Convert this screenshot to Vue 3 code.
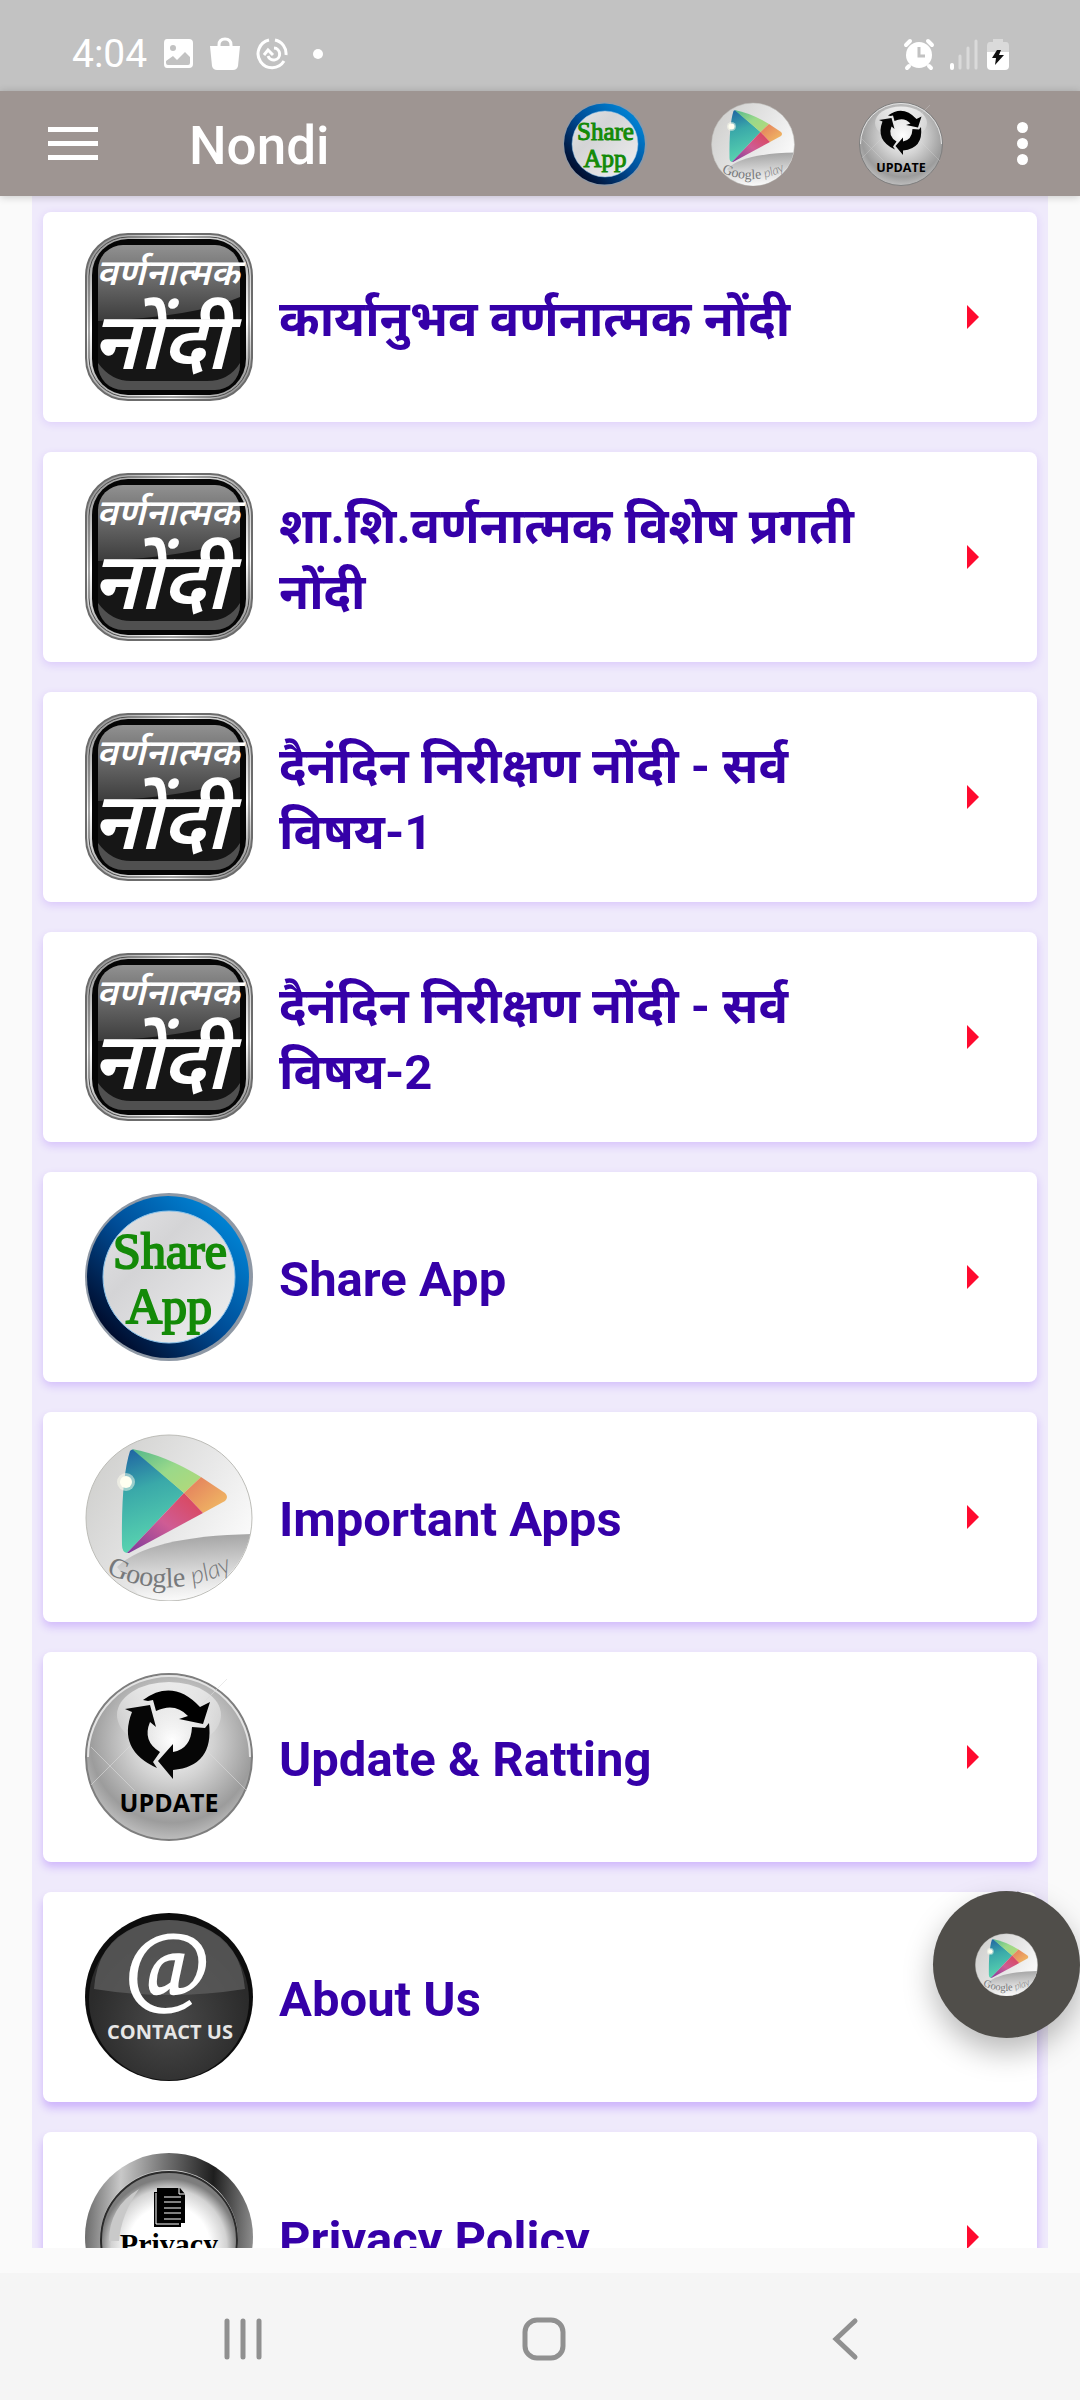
<template>
  <div class="screen">
    <!-- shared gradients and artwork -->
    <svg class="sprite" width="0" height="0" aria-hidden="true">
      <defs>
        <linearGradient id="rim" x1="0" y1="0" x2="1" y2="1">
          <stop offset="0" stop-color="#777" />
          <stop offset="0.3" stop-color="#fff" />
          <stop offset="0.5" stop-color="#aaa" />
          <stop offset="0.75" stop-color="#fff" />
          <stop offset="1" stop-color="#666" />
        </linearGradient>
        <linearGradient id="gloss" x1="0" y1="0" x2="0" y2="1">
          <stop offset="0" stop-color="#919191" />
          <stop offset="1" stop-color="#3c3c3c" />
        </linearGradient>
        <linearGradient id="blueRing" x1="0.15" y1="0.85" x2="0.85" y2="0.15">
          <stop offset="0" stop-color="#000d2e" />
          <stop offset="0.5" stop-color="#004c96" />
          <stop offset="1" stop-color="#0081d2" />
        </linearGradient>
        <linearGradient id="silver" x1="0" y1="0" x2="1" y2="1">
          <stop offset="0" stop-color="#e4e4e6" />
          <stop offset="0.35" stop-color="#d4d4d6" />
          <stop offset="1" stop-color="#f0f0f1" />
        </linearGradient>
        <linearGradient id="playBall" x1="0" y1="0.2" x2="1" y2="0.8">
          <stop offset="0" stop-color="#cfcfcd" />
          <stop offset="0.55" stop-color="#e8e8e8" />
          <stop offset="1" stop-color="#fff" />
        </linearGradient>
        <linearGradient id="playTeal" x1="0.1" y1="0" x2="0.3" y2="1">
          <stop offset="0" stop-color="#1f64a3" />
          <stop offset="0.4" stop-color="#3aa9a9" />
          <stop offset="1" stop-color="#5bd6b0" />
        </linearGradient>
        <linearGradient id="playGreen" x1="0" y1="0" x2="1" y2="1">
          <stop offset="0" stop-color="#52b78b" />
          <stop offset="0.5" stop-color="#9ad98a" />
          <stop offset="1" stop-color="#b5d977" />
        </linearGradient>
        <linearGradient id="playRed" x1="1" y1="0" x2="0" y2="1">
          <stop offset="0" stop-color="#dd4352" />
          <stop offset="0.5" stop-color="#cf5c94" />
          <stop offset="1" stop-color="#7b3a9c" />
        </linearGradient>
        <linearGradient id="playOrange" x1="0" y1="0" x2="1" y2="1">
          <stop offset="0" stop-color="#e2795c" />
          <stop offset="1" stop-color="#f2c065" />
        </linearGradient>
        <linearGradient id="playShade" x1="0.5" y1="0" x2="0.6" y2="1">
          <stop offset="0" stop-color="#a2a2a2" />
          <stop offset="0.6" stop-color="#dedede" />
          <stop offset="1" stop-color="#fff" />
        </linearGradient>
        <radialGradient id="glassBall" cx="0.52" cy="0.4" r="0.62">
          <stop offset="0" stop-color="#fff" />
          <stop offset="0.4" stop-color="#d2d2d2" />
          <stop offset="0.8" stop-color="#9c9c9c" />
          <stop offset="1" stop-color="#c4c4c4" />
        </radialGradient>
        <linearGradient id="glassTop" x1="0" y1="0" x2="0" y2="1">
          <stop offset="0" stop-color="#fff" stop-opacity="0.7" />
          <stop offset="1" stop-color="#fff" stop-opacity="0" />
        </linearGradient>
        <radialGradient id="darkBall" cx="0.5" cy="0.62" r="0.5">
          <stop offset="0" stop-color="#4a4a4a" />
          <stop offset="1" stop-color="#2b2b2b" />
        </radialGradient>
        <linearGradient id="metal" x1="0" y1="0.4" x2="1" y2="0.45">
          <stop offset="0" stop-color="#6b6b6b" />
          <stop offset="0.2" stop-color="#c8c8c8" />
          <stop offset="0.45" stop-color="#757575" />
          <stop offset="0.75" stop-color="#1e1e1e" />
          <stop offset="1" stop-color="#8c8c8c" />
        </linearGradient>
        <radialGradient id="pearl" cx="0.5" cy="0.55" r="0.5">
          <stop offset="0.6" stop-color="#fff" />
          <stop offset="0.85" stop-color="#d2d2d2" />
          <stop offset="1" stop-color="#7d7d7d" />
        </radialGradient>
        <path id="playCurve" d="M21 140 Q84 171 152 135" />
        <clipPath id="ballClip"><circle cx="84" cy="84" r="83" /></clipPath>
        <clipPath id="faceClip"><rect x="13" y="12" width="142" height="145" rx="25" /></clipPath>
      </defs>

      <symbol id="icon-nondi" viewBox="0 0 168 168">
        <rect x="1" y="1" width="166" height="166" rx="42" fill="url(#rim)" stroke="#6c6c6c" stroke-width="2" />
        <rect x="4" y="4" width="160" height="160" rx="39" fill="none" stroke="#4b4b4b" stroke-width="1" />
        <rect x="7" y="6" width="154" height="156" rx="36" fill="#050505" />
        <g clip-path="url(#faceClip)">
          <rect x="13" y="12" width="142" height="145" fill="#161616" />
          <path d="M13 12H155V64Q110 84 13 88Z" fill="url(#gloss)" />
          <path d="M13 130Q26 148 46 148H122Q144 148 155 130V157H13Z" fill="#505050" />
        </g>
      </symbol>

      <symbol id="icon-share" viewBox="0 0 168 168">
        <circle cx="84" cy="84" r="84" fill="#8e98a5" />
        <circle cx="83" cy="84" r="81" fill="url(#blueRing)" />
        <circle cx="84" cy="84" r="66" fill="url(#silver)" stroke="#8cc3ea" stroke-width="1" />
      </symbol>

      <symbol id="icon-play" viewBox="0 0 168 168">
        <circle cx="84" cy="85" r="83" fill="url(#playBall)" stroke="#bdbdb8" stroke-width="1" />
        <g clip-path="url(#ballClip)">
          <path d="M32 134Q64 103 168 101V170H60Z" fill="url(#playShade)" />
        </g>
        <path d="M45 18Q47 15 51 18L99 60L42 120Q37 119 37 112Q36 46 45 18Z" fill="url(#playTeal)" />
        <path d="M47 16Q80 22 116 44L99 60Z" fill="url(#playGreen)" />
        <path d="M116 44L140 60Q144 64 140 68L118 80L99 60Z" fill="url(#playOrange)" />
        <path d="M99 60L118 80L44 120H42Z" fill="url(#playRed)" />
        <circle cx="41" cy="49" r="9" fill="#fffff0" opacity="0.5" />
        <circle cx="41" cy="49" r="6" fill="#fffff0" />
      </symbol>

      <symbol id="icon-update" viewBox="0 0 168 168">
        <circle cx="84" cy="84" r="83" fill="url(#glassBall)" stroke="#7e7e7e" stroke-width="2" />
        <path d="M3 84A81 81 0 0 1 165 84" fill="none" stroke="#e3e3e3" stroke-width="2" />
        <ellipse cx="84" cy="42" rx="52" ry="33" fill="url(#glassTop)" />
        <path d="M6 112L60 58M106 42L142 6M118 74L162 118M6 74L50 118" stroke="#dcdcdc" stroke-width="1" opacity="0.6" />
        <path d="M58 27Q88 5 115 34L125 29L118 51L94 46L103 43Q90 29 71 38L68 27L63 28Z" fill="#000" />
        <path d="M65 32L40 36L47 39Q32 77 72 95L68 89L75 79Q57 68 65 49L71 54Z" fill="#060606" />
        <path d="M73 88L88 71V79Q106 76 107 54L120 55L124 50Q129 93 88 97V106Z" fill="#060606" />
      </symbol>

      <symbol id="icon-contact" viewBox="0 0 168 168">
        <circle cx="84" cy="84" r="84" fill="#0d0d0d" />
        <circle cx="84" cy="87" r="80" fill="url(#darkBall)" />
        <path d="M9 76Q12 30 50 14Q84 0 118 14Q156 30 160 76Q84 88 9 76Z" fill="#5c5c5c" opacity="0.8" />
      </symbol>

      <symbol id="icon-privacy" viewBox="0 0 168 168">
        <circle cx="84" cy="84" r="84" fill="url(#metal)" />
        <circle cx="84" cy="86" r="69" fill="#ccc" />
        <circle cx="84" cy="87" r="68" fill="url(#pearl)" stroke="#2b2b2b" stroke-width="2" />
        <path d="M24 88Q24 54 54 36Q36 62 34 88Z" fill="#c9c9c9" />
        <path d="M72 35H95L100 41V70H96V74H69V39H72Z" fill="#000" />
        <path d="M94 35V41H100M79 44H96M79 49H96M79 55H96M79 60H96M79 66H96M71 40V71H94" fill="none" stroke="#fff" stroke-width="1" />
      </symbol>
    </svg>

    <div class="status-bar">
      <div class="status-left">
        <span class="clock">4:04</span>
        <svg class="status-icon" viewBox="0 0 32 34">
          <path fill-rule="evenodd" d="M5 2H27Q31 2 31 6V27Q31 31 27 31H5Q2 31 2 27V6Q2 2 5 2ZM11 8A3 3 0 1 0 11 14A3 3 0 1 0 11 8ZM4 24V26Q4 28 6 28H26Q28 28 28 26V20L23 15L15 23L11 19Z" fill="#fff" />
        </svg>
        <svg class="status-icon" viewBox="0 0 32 34">
          <path d="M10 10V8Q10 2 16 2T22 8V10" fill="none" stroke="#fff" stroke-width="3" />
          <path d="M1 9H31L29 29Q28 33 24 33H8Q4 33 3 29Z" fill="#fff" />
        </svg>
        <svg class="status-icon" viewBox="0 0 32 34">
          <g fill="none" stroke="#fff" stroke-width="3">
            <path d="M13 3A14 14 0 1 0 28 24M19 3A14 14 0 0 1 30 18" />
            <path d="M18 11A6 6 0 1 1 12 19M8 18L12 13L17 18" />
          </g>
        </svg>
        <span class="dot"></span>
      </div>
      <div class="status-right">
        <svg class="status-icon" viewBox="0 0 32 34">
          <circle cx="16" cy="18" r="13" fill="#fff" />
          <path d="M3 8L7 4M29 8L25 4M6 29L4 31M26 29L28 31" stroke="#fff" stroke-width="4" stroke-linecap="round" />
          <path d="M16 10V19H22" fill="none" stroke="#c2c2c2" stroke-width="3" />
        </svg>
        <svg class="status-icon" viewBox="0 0 32 34">
          <path d="M4 28V31" stroke="#fff" stroke-width="4" stroke-linecap="round" />
          <path d="M12 19V31M20 11V31M28 4V31" stroke="#dadada" stroke-width="3" stroke-linecap="round" />
        </svg>
        <svg class="battery" viewBox="0 0 22 34">
          <path d="M6 2H16V5H19Q22 5 22 9V16H0V9Q0 5 3 5H6Z" fill="#dadada" />
          <path d="M0 15H22V29Q22 33 18 33H4Q0 33 0 29Z" fill="#fff" />
          <path d="M10 13L5 21H9L8 28L17 18H12L14 13Z" fill="#111" />
        </svg>
      </div>
    </div>

    <header class="app-bar">
      <button class="menu-btn" aria-label="Menu">
        <span></span><span></span><span></span>
      </button>
      <h1 class="app-title">Nondi</h1>
      <div class="actions">
        <button
          v-for="action in actions"
          :key="action.icon"
          class="action-btn"
          :aria-label="action.label"
        >
          <BadgeIcon :name="action.icon" />
        </button>
      </div>
      <button class="more-btn" aria-label="More options">
        <span></span><span></span><span></span>
      </button>
    </header>

    <main class="content">
      <ul class="list">
        <li v-for="(item, index) in items" :key="item.title">
          <button class="card" :style="{ boxShadow: cardShadow(index) }">
            <BadgeIcon class="card-icon" :name="item.icon" />
            <span class="card-title">{{ item.title }}</span>
            <svg class="card-arrow" viewBox="0 0 12 24"><path d="M0 0L12 12L0 24Z" fill="#ff0a2f" /></svg>
          </button>
        </li>
      </ul>
    </main>

    <button class="fab" aria-label="Google play">
      <BadgeIcon class="fab-icon" name="play" />
    </button>

    <nav class="nav-bar">
      <button aria-label="Recents">
        <svg viewBox="0 0 44 44"><path d="M6 4V40M22 4V40M38 4V40" /></svg>
      </button>
      <button aria-label="Home">
        <svg viewBox="0 0 44 44"><rect x="3" y="3" width="38" height="38" rx="12" /></svg>
      </button>
      <button aria-label="Back">
        <svg viewBox="0 0 44 44"><path d="M32 4L13 22L32 40" /></svg>
      </button>
    </nav>
  </div>
</template>

<script setup>
import { h, ref } from 'vue'

// lettering that sits on top of each badge
const badgeTexts = {
  nondi: [
    { x: 83, y: 52, cls: 'nondi-small', text: 'वर्णनात्मक' },
    { x: 75, y: 136, cls: 'nondi-large', text: 'नोंदी' }
  ],
  share: [
    { x: 85, y: 75, cls: 'share', text: 'Share' },
    { x: 84, y: 130, cls: 'share', text: 'App' }
  ],
  update: [{ x: 84, y: 139, cls: 'update', text: 'UPDATE' }],
  contact: [
    { x: 82, y: 82, cls: 'contact-at', text: '@' },
    { x: 85, y: 126, cls: 'contact', text: 'CONTACT US' }
  ],
  privacy: [{ x: 84, y: 101, cls: 'privacy', text: 'Privacy' }]
}

const BadgeIcon = ({ name }) => h('svg', { class: 'badge', viewBox: '0 0 168 168' }, [
  h('use', { href: `#icon-${name}` }),
  ...(badgeTexts[name] || []).map((t) =>
    h('text', { x: t.x, y: t.y, class: `badge-text badge-${t.cls}` }, t.text)
  ),
  name === 'play' && h('text', { class: 'badge-google' }, [
    h('textPath', { href: '#playCurve' }, [
      'Google ',
      h('tspan', { class: 'badge-play' }, 'play')
    ])
  ])
])
BadgeIcon.props = ['name']

const actions = [
  { icon: 'share', label: 'Share App' },
  { icon: 'play', label: 'Google play' },
  { icon: 'update', label: 'Update' }
]

const items = ref([
  { icon: 'nondi', title: 'कार्यानुभव वर्णनात्मक नोंदी' },
  { icon: 'nondi', title: 'शा.शि.वर्णनात्मक विशेष प्रगती नोंदी' },
  { icon: 'nondi', title: 'दैनंदिन निरीक्षण नोंदी - सर्व विषय-1' },
  { icon: 'nondi', title: 'दैनंदिन निरीक्षण नोंदी - सर्व विषय-2' },
  { icon: 'share', title: 'Share App' },
  { icon: 'play', title: 'Important Apps' },
  { icon: 'update', title: 'Update & Ratting' },
  { icon: 'contact', title: 'About Us' },
  { icon: 'privacy', title: 'Privacy Policy' }
])

// shadows grow towards the bottom of the list
const cardShadow = (index) => {
  const offset = 2 + Math.round(index / 2)
  return `0 ${offset}px 8px rgba(120, 40, 255, ${0.14 + index * 0.02})`
}
</script>

<style>
body {
  background: #fafafa;
}

.badge {
  display: block;
  width: 100%;
  height: 100%;
}

.badge-text {
  text-anchor: middle;
}

.badge-nondi-small,
.badge-nondi-large {
  fill: #fff;
  font-family: 'Noto Sans Devanagari', 'Noto Sans', sans-serif;
  font-style: italic;
  font-weight: 600;
}

.badge-nondi-small {
  font-size: 36px;
}

.badge-nondi-large {
  font-size: 80px;
}

.badge-share {
  fill: #148a08;
  stroke: #148a08;
  stroke-width: 2px;
  font-family: 'Liberation Serif', serif;
  font-size: 50px;
}

.badge-google {
  fill: #77797b;
  font-family: 'Liberation Serif', serif;
  font-size: 28px;
}

.badge-play {
  font-family: Lato, sans-serif;
  font-size: 25px;
  font-style: italic;
  font-weight: 300;
}

.badge-update {
  fill: #000;
  font-family: 'Open Sans', sans-serif;
  font-size: 25px;
  font-weight: 700;
}

.badge-contact-at {
  fill: #fff;
  stroke: #fff;
  stroke-width: 2px;
  font-family: 'Liberation Serif', serif;
  font-size: 92px;
  font-style: italic;
}

.badge-contact {
  fill: #e6e6e6;
  font-family: 'Open Sans', sans-serif;
  font-size: 20px;
  font-weight: 700;
}

.badge-privacy {
  fill: #000;
  font-family: 'Liberation Serif', serif;
  font-size: 30px;
  font-weight: 700;
}
</style>

<style scoped>
.screen {
  position: relative;
  display: flex;
  flex-direction: column;
  height: 100vh;
  background: #fafafa;
  font-family: Roboto, 'Noto Sans Devanagari', 'Noto Sans', sans-serif;
}

.sprite {
  position: absolute;
}

button {
  padding: 0;
  border: none;
  background: none;
  font-family: inherit;
  cursor: pointer;
}

svg {
  display: block;
}

.status-bar {
  display: flex;
  flex: none;
  justify-content: space-between;
  height: 91px;
  padding: 16px 71px 0 72px;
  box-sizing: border-box;
  background: #c2c2c2;
}

.status-left,
.status-right {
  display: flex;
  align-items: center;
  gap: 15px;
}

.status-right {
  gap: 7px;
}

.status-right .status-icon:first-child {
  margin-right: 6px;
}

.clock {
  color: #fff;
  font-size: 39px;
  line-height: 40px;
}

.status-icon {
  width: 32px;
  height: 34px;
}

.battery {
  width: 22px;
  height: 34px;
}

.dot {
  width: 10px;
  height: 10px;
  margin-left: 10px;
  border-radius: 50%;
  background: #fff;
}

.app-bar {
  position: relative;
  z-index: 1;
  display: flex;
  flex: none;
  align-items: center;
  height: 105px;
  padding: 0 48px;
  box-sizing: border-box;
  background: #9e9592;
  box-shadow: 0 1px 8px rgba(0, 0, 0, 0.2);
}

.menu-btn {
  display: grid;
  gap: 9px;
  width: 50px;
}

.menu-btn span {
  height: 5px;
  background: #fff;
}

.app-title {
  flex: 1;
  margin: 0 0 0 91px;
  padding-top: 5px;
  color: #fff;
  font-size: 53px;
  font-weight: 500;
  line-height: 64px;
}

.actions {
  display: flex;
  gap: 64px;
  margin-right: 69px;
}

.action-btn {
  width: 84px;
  height: 84px;
}

.more-btn {
  display: grid;
  justify-items: center;
  gap: 5px;
  width: 20px;
}

.more-btn span {
  width: 11px;
  height: 11px;
  border-radius: 50%;
  background: #fff;
}

.content {
  flex: 1;
  min-height: 0;
  margin: 0 32px 25px;
  overflow: hidden;
  background: #efeafb;
}

.list {
  display: grid;
  gap: 30px;
  margin: 0;
  padding: 16px 11px;
  list-style: none;
}

.card {
  display: flex;
  align-items: center;
  width: 100%;
  height: 210px;
  padding: 0 58px 0 42px;
  border-radius: 8px;
  background: #fff;
  text-align: left;
}

.card-icon {
  flex: none;
  width: 168px;
  height: 168px;
}

.card-title {
  flex: 1;
  margin: 0 40px 0 26px;
  padding-top: 5px;
  color: #3500a8;
  font-size: 49px;
  font-weight: 700;
  line-height: 66px;
}

.card-arrow {
  flex: none;
  width: 12px;
  height: 24px;
}

.fab {
  position: absolute;
  right: 0;
  bottom: 362px;
  z-index: 2;
  display: grid;
  place-items: center;
  width: 147px;
  height: 147px;
  border-radius: 50%;
  background: #504e4a;
  box-shadow: 0 14px 30px rgba(0, 0, 0, 0.28);
}

.fab-icon {
  width: 63px;
  height: 63px;
}

.nav-bar {
  display: grid;
  flex: none;
  grid-template-columns: repeat(3, 1fr);
  height: 127px;
  padding: 5px 85px 0 93px;
  box-sizing: border-box;
  background: #f5f5f5;
}

.nav-bar button {
  display: grid;
  place-items: center;
}

.nav-bar svg {
  width: 44px;
  height: 44px;
  fill: none;
  stroke: #909090;
  stroke-width: 5;
  stroke-linecap: round;
}
</style>
